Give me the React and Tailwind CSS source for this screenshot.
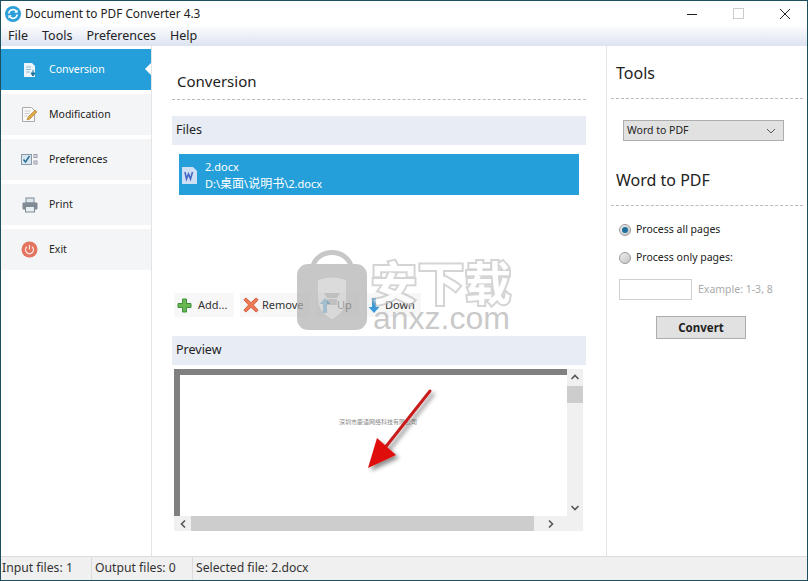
import React from "react";

const font = { fontFamily: '"Noto Sans","Noto Sans CJK SC",sans-serif' };

function Nav({ label, active, children }) {
  return (
    <div className={`relative h-[41px] flex items-center pl-[20px] gap-[11px] text-[10.5px] ${active ? "bg-[#259fd9] text-white" : "bg-[#f4f5f7] text-[#222]"}`}>
      <div className="w-[17px] h-[18px] flex items-center justify-center">{children}</div>
      <span>{label}</span>
      {active && <div className="absolute right-0 top-[14px] w-0 h-0 border-y-[6px] border-y-transparent border-r-[6px] border-r-white" />}
    </div>
  );
}

function Tool({ label, w, gap, children }) {
  return (
    <div className={`h-[24px] flex items-center pl-[3px] bg-[#f7f7f7] text-[11px] text-[#333] ${gap}`} style={{ width: w }}>
      {children}
      <span>{label}</span>
    </div>
  );
}

function Section({ children }) {
  return <div className="h-[29px] bg-[#e8edf5] flex items-center pl-[4px] text-[12.5px] text-[#222]">{children}</div>;
}

function Radio({ on, label }) {
  return (
    <div className="h-[16px] flex items-center gap-[5px] text-[10.5px] text-[#222]">
      <div className="w-[12px] h-[12px] rounded-full border border-[#9a9a9a] bg-gradient-to-br from-[#eee] to-[#c4c4c4] flex items-center justify-center">
        {on && <div className="w-[6px] h-[6px] rounded-full bg-[#1f6f9f]" />}
      </div>
      <span>{label}</span>
    </div>
  );
}

export default function App() {
  return (
    <div className="relative w-[808px] h-[581px] flex flex-col overflow-hidden bg-white border border-[#1d4f5c]" style={font}>
      {/* title bar */}
      <div className="h-[25px] flex items-center bg-white shrink-0">
        <svg width="16" height="16" viewBox="0 0 16 16" className="ml-[4px]">
          <circle cx="8" cy="8" r="8" fill="#2a9fd8" />
          <path d="M3.8 7.500A4.3 4.3 0 0 1 11.500 5.400" fill="none" stroke="#fff" strokeWidth="1.6" />
          <path d="M12.200 8.500A4.3 4.3 0 0 1 4.500 10.600" fill="none" stroke="#fff" strokeWidth="1.6" />
          <path d="M12.600 3.400v3.400H9.200z" fill="#fff" />
          <path d="M3.400 12.600V9.200h3.400z" fill="#fff" />
        </svg>
        <span className="ml-[4px] text-[11.8px] text-[#222]">Document to PDF Converter 4.3</span>
        <div className="ml-auto flex items-center">
          <svg width="12" height="12" viewBox="0 0 12 12" className="mr-[35px]"><path d="M1 6.500h10" stroke="#222" strokeWidth="1" /></svg>
          <svg width="11" height="11" viewBox="0 0 11 11" className="mr-[35px]"><rect x="0.5" y="0.5" width="10" height="10" fill="none" stroke="#ccc" /></svg>
          <svg width="12" height="12" viewBox="0 0 12 12" className="mr-[16px]"><path d="M1 1l10 10M11 1L1 11" stroke="#222" strokeWidth="1" /></svg>
        </div>
      </div>
      {/* menu */}
      <div className="h-[20px] flex items-center gap-[14px] pl-[7px] text-[12.5px] text-[#222] bg-gradient-to-b from-[#fbfcfe] to-[#dde3f1] shrink-0">
        <span>File</span><span>Tools</span><span>Preferences</span><span>Help</span>
      </div>
      {/* body */}
      <div className="flex-1 flex min-h-0">
        {/* sidebar */}
        <div className="w-[150px] shrink-0 pt-[3px] flex flex-col gap-[4px] border-r border-[#e4e4e4] box-content">
          <Nav label="Conversion" active>
            <svg width="14" height="16" viewBox="0 0 14 16"><path d="M1 1h8l3 3v11H1z" fill="#eef5fa" /><path d="M3 5h5M3 7.500h5M3 10h4" stroke="#8fb9d3" /><path d="M10 8v4M8 11l2 3 2-3z" stroke="#1e6f9c" fill="#1e6f9c" /></svg>
          </Nav>
          <Nav label="Modification">
            <svg width="17" height="17" viewBox="0 0 17 17"><path d="M1.500 1.500h9l3 3v11h-12z" fill="#fafafa" stroke="#aaa" /><path d="M3.500 5h6M3.500 7.500h5M3.500 10h3" stroke="#ccc" /><path d="M6 14l1-3 7-7 2 2-7 7z" fill="#e0a94a" stroke="#a87a2a" strokeWidth="0.6" /></svg>
          </Nav>
          <Nav label="Preferences">
            <svg width="17" height="12" viewBox="0 0 17 12"><rect x="0.5" y="0.5" width="10" height="10" fill="#d8e6f0" stroke="#8a9aa8" /><path d="M2.500 5.500l2 2.500 4-6" fill="none" stroke="#2a6f9a" strokeWidth="1.5" /><rect x="13" y="0.5" width="3" height="3" fill="#dde" stroke="#98a0a8" /><rect x="13" y="7" width="3" height="3" fill="#dde" stroke="#98a0a8" /></svg>
          </Nav>
          <Nav label="Print">
            <svg width="16" height="16" viewBox="0 0 16 16"><rect x="4" y="1" width="8" height="5" fill="#dfe8ee" stroke="#7d8a94" /><rect x="0.5" y="5.500" width="15" height="7" rx="1" fill="#7f8a94" /><rect x="3.500" y="9.500" width="9" height="5.500" fill="#e8eef2" stroke="#7d8a94" /></svg>
          </Nav>
          <Nav label="Exit">
            <svg width="17" height="17" viewBox="0 0 17 17"><circle cx="8.500" cy="8.500" r="8" fill="#e4735f" /><path d="M5.800 5.800a4 4 0 1 0 5.400 0" fill="none" stroke="#fbe3de" strokeWidth="1.3" /><path d="M8.500 4v4.500" stroke="#fbe3de" strokeWidth="1.3" /></svg>
          </Nav>
        </div>
        {/* main */}
        <div className="w-[455px] shrink-0 border-r border-[#e4e4e4] pl-[20px] pr-[20px]">
          <div className="h-[54px] pl-[5px] pt-[23px] border-b border-dashed border-[#bbb] text-[15px] leading-[24px] text-[#222]">Conversion</div>
          <div className="mt-[16px]"><Section>Files</Section></div>
          <div className="h-[148px] pt-[9px] px-[7px]">
            <div className="h-[41px] bg-[#259fd9] flex items-center pl-[2px] gap-[6px] text-white text-[11px] leading-[17px]">
              <svg width="18" height="20" viewBox="0 0 18 20"><path d="M1 2h11l4 4v13H1z" fill="#cfe0f5" /><path d="M4 7l1.500 7 2-5 2 5L11.500 7" fill="none" stroke="#4468c4" strokeWidth="1.6" /></svg>
              <div><div>2.docx</div><div>D:\<span className="text-[12px]">桌面</span>\<span className="text-[12px]">说明书</span>\2.docx</div></div>
            </div>
          </div>
          <div className="h-[24px] flex items-center gap-[6px] pl-[2px]">
            <Tool label="Add..." w="60px" gap="gap-[6px]">
              <svg width="15" height="15" viewBox="0 0 15 15"><path d="M5.500 1h4v4.500H14v4H9.500V14h-4V9.500H1v-4h4.500z" fill="#67b850" stroke="#3f8f3a" /></svg>
            </Tool>
            <Tool label="Remove" w="70px" gap="gap-[3px]">
              <svg width="16" height="16" viewBox="0 0 17 17"><path d="M3 1l5.500 5L14 1l2 2-5 5.500 5 5.500-2 2-5.500-5L3 16l-2-2 5-5.500L1 3z" fill="#ee7a55" stroke="#cc5a3a" /></svg>
            </Tool>
            <Tool label="Up" w="43px" gap="gap-[6px]">
              <svg width="12" height="15" viewBox="0 0 12 15"><path d="M6 0l5.500 6H8v9H4V6H.5z" fill="#3d9ad6" /></svg>
            </Tool>
            <Tool label="Down" w="56px" gap="gap-[5px]">
              <svg width="12" height="15" viewBox="0 0 12 15"><path d="M6 15L.5 9H4V0h4v9h3.500z" fill="#3d9ad6" /></svg>
            </Tool>
          </div>
          <div className="mt-[19px]"><Section>Preview</Section></div>
          {/* preview */}
          <div className="relative mt-[4px] ml-[2px] w-[409px] h-[162px] grid grid-cols-[393px_16px] grid-rows-[147px_15px]">
            <div className="relative bg-white border-t-[6px] border-l-[6px] border-[#808080] overflow-hidden">
              <div className="absolute left-[159px] top-[43px] text-[6px] leading-[8px] text-[#888] whitespace-nowrap">深圳市鹿语网络科技有限公司</div>
              <svg className="absolute left-[180px] top-[8px]" width="80" height="95" viewBox="0 0 80 95">
                <defs><filter id="s" x="-30%" y="-30%" width="160%" height="160%"><feDropShadow dx="3" dy="3" stdDeviation="2" floodColor="#000" floodOpacity="0.45" /></filter></defs>
                <g filter="url(#s)">
                  <path d="M70 8L24 66" stroke="#c81c1c" strokeWidth="3" strokeLinecap="round" />
                  <path d="M8 85L17 55L36 72z" fill="#e01010" />
                </g>
              </svg>
            </div>
            <div className="bg-[#f0f0f0] flex flex-col items-center">
              <svg width="10" height="8" viewBox="0 0 10 8" className="mt-[4px]"><path d="M1.500 6L5 2.500 8.500 6" fill="none" stroke="#555" strokeWidth="1.6" /></svg>
              <div className="w-full h-[17px] mt-[5px] bg-[#cdcdcd]" />
              <svg width="10" height="8" viewBox="0 0 10 8" className="mt-auto mb-[4px]"><path d="M1.500 2L5 5.500 8.500 2" fill="none" stroke="#555" strokeWidth="1.6" /></svg>
            </div>
            <div className="bg-[#f0f0f0] flex items-center">
              <div className="w-[17px] flex justify-center"><svg width="8" height="10" viewBox="0 0 8 10"><path d="M6 1.500L2.500 5 6 8.500" fill="none" stroke="#555" strokeWidth="1.6" /></svg></div>
              <div className="w-[343px] h-full bg-[#cdcdcd]" />
              <div className="flex-1 flex justify-center"><svg width="8" height="10" viewBox="0 0 8 10"><path d="M2 1.500L5.500 5 2 8.500" fill="none" stroke="#555" strokeWidth="1.6" /></svg></div>
            </div>
            <div className="bg-[#f0f0f0]" />
          </div>
        </div>
        {/* tools */}
        <div className="flex-1 pl-[4px] pr-[4px]">
          <div className="h-[53px] pl-[5px] pt-[15px] border-b border-dashed border-[#bbb] text-[16px] leading-[24px] text-[#222]">Tools</div>
          <div className="mt-[21px] ml-[12px] w-[161px] h-[21px] bg-[#e1e1e1] border border-[#adadad] flex items-center justify-between pl-[3px] pr-[7px] text-[10.5px] text-[#222]">
            <span>Word to PDF</span>
            <svg width="10" height="6" viewBox="0 0 10 6"><path d="M1 1l4 4 4-4" fill="none" stroke="#555" /></svg>
          </div>
          <div className="h-[65px] pl-[5px] pt-[27px] border-b border-dashed border-[#bbb] text-[16px] leading-[24px] text-[#222] whitespace-nowrap">Word to PDF</div>
          <div className="mt-[16px] ml-[8px] flex flex-col gap-[12px]">
            <Radio on label="Process all pages" />
            <Radio label="Process only pages:" />
          </div>
          <div className="mt-[13px] ml-[8px] flex items-center gap-[6px]">
            <div className="w-[73px] h-[21px] bg-white border border-[#d0d0d0]" />
            <span className="text-[10.5px] text-[#aaa]">Example: 1-3, 8</span>
          </div>
          <div className="mt-[16px] ml-[45px] w-[90px] h-[23px] bg-[#e1e1e1] border border-[#adadad] flex items-center justify-center text-[11.5px] font-bold text-[#222]">Convert</div>
        </div>
      </div>
      {/* status */}
      <div className="h-[24px] shrink-0 flex items-center bg-[#f0f0f0] border-t border-[#dcdcdc] text-[12.2px] text-[#333]">
        <div className="w-[91px] h-full pl-[1px] flex items-center border-r border-[#dcdcdc]">Input files: 1</div>
        <div className="w-[101px] h-full pl-[3px] flex items-center border-r border-[#dcdcdc]">Output files: 0</div>
        <div className="pl-[3px]">Selected file: 2.docx</div>
      </div>
      {/* watermark */}
      <div className="absolute left-[295px] top-[248px] w-[72px] h-[82px] pointer-events-none opacity-70">
        <svg width="72" height="82" viewBox="0 0 72 82">
          <path d="M16 20C20 -2 52 -2 56 20" fill="none" stroke="#b0b0b0" strokeWidth="5" />
          <rect x="1" y="15" width="70" height="66" rx="11" fill="#b0b0b0" />
          <path d="M22 31q14-5 28 0v18q0 14-14 21-14-7-14-21z" fill="#d8d8d8" opacity="0.7" />
          <path d="M28 44h16l-3 5h-10zM31 50h10v6h-10z" fill="#a9a9a9" />
        </svg>
      </div>
      <div className="absolute left-[370px] top-[254px] pointer-events-none text-[46px] leading-[54px] tracking-[1px] font-bold text-white opacity-60 [-webkit-text-stroke:4px_#b8b8b8] [paint-order:stroke_fill] whitespace-nowrap">安下载</div>
      <div className="absolute left-[372px] top-[295px] pointer-events-none text-[32px] leading-[44px] text-[#b8b8b8]/75 whitespace-nowrap" style={{ fontFamily: '"Liberation Sans",sans-serif' }}>anxz.com</div>
    </div>
  );
}
